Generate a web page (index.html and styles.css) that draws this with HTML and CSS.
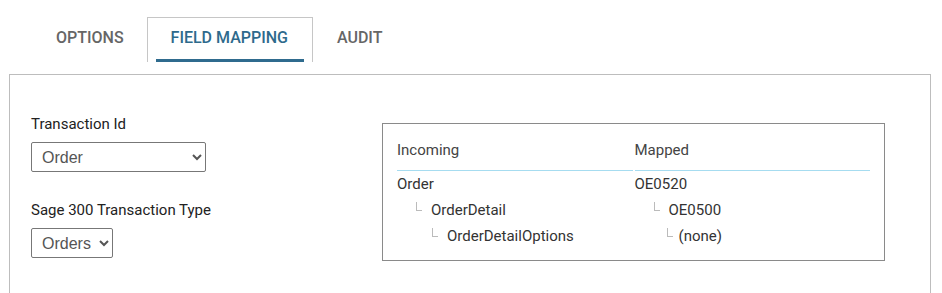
FILE: index.html
```html
<!DOCTYPE html>
<html lang="en">
<head>
    <meta charset="UTF-8">
    <meta name="viewport" content="width=device-width, initial-scale=1.0">
    <title>Field Mapping</title>
    <link rel="stylesheet" href="styles.css">
</head>
<body>
    <div class="tabs">
        <a href="#" class="tab"><span>Options</span></a>
        <a href="#" class="tab active"><span>Field Mapping</span></a>
        <a href="#" class="tab"><span>Audit</span></a>
    </div>

    <div class="panel">
        <div class="form-col">
            <label class="field-label" for="transactionId">Transaction Id</label>
            <select id="transactionId" class="wide">
                <option>Order</option>
            </select>

            <label class="field-label second" for="sageType">Sage 300 Transaction Type</label>
            <select id="sageType">
                <option>Orders</option>
            </select>
        </div>

        <div class="mapping-box">
            <div class="mapping-grid">
                <div class="head">Incoming</div>
                <div class="head">Mapped</div>

                <div class="cell">Order</div>
                <div class="cell">OE0520</div>

                <div class="cell lvl1"><i class="branch"></i>OrderDetail</div>
                <div class="cell lvl1 mapped"><i class="branch"></i>OE0500</div>

                <div class="cell lvl2"><i class="branch"></i>OrderDetailOptions</div>
                <div class="cell lvl2 mapped"><i class="branch"></i>(none)</div>
            </div>
        </div>
    </div>
</body>
</html>
```

FILE: styles.css
```css
body {
    margin: 0;
    font-family: Roboto, "Liberation Sans", sans-serif;
    color: #222;
    background-color: white;
}
.tabs {
    display: flex;
    padding: 17px 0 0 32px;
    margin-bottom: 12px;
}
.tab {
    display: block;
    height: 44px;
    padding: 0 7px 0 8px;
    border: 1px solid transparent;
    border-bottom: none;
    font-size: 16px;
    font-weight: 500;
    text-transform: uppercase;
    text-decoration: none;
    color: #666;
}
.tab span {
    display: block;
    height: 41px;
    line-height: 40px;
    padding: 0 15px;
    border-bottom: 3px solid transparent;
}
.tab.active {
    padding-right: 8px;
    border-color: #c6c6c6;
    color: #2e6a8c;
}
.tab.active span {
    padding-right: 16px;
    border-bottom-color: #2f6b8e;
}
.panel {
    display: flex;
    align-items: flex-start;
    margin: 0 11px 0 9px;
    height: 240px;
    border: 1px solid #bdbdbd;
    padding: 39px 0 0 21px;
}
.form-col {
    width: 351px;
    display: flex;
    flex-direction: column;
    align-items: flex-start;
}
.field-label {
    font-size: 15px;
    line-height: 20px;
    color: #222;
    margin-bottom: 8px;
}
.field-label.second {
    margin-top: 28px;
}
select {
    height: 30px;
    font-family: "Liberation Sans", Arial, sans-serif;
    font-size: 16px;
    color: #555;
    background: white;
    border: 1px solid #777;
    border-radius: 2px;
    padding: 0 5px 0 6px;
}
select.wide {
    width: 175px;
}
.mapping-box {
    width: 473px;
    margin-top: 9px;
    border: 1px solid #8a8a8a;
    padding: 16px 14px 11px 14px;
}
.mapping-grid {
    display: grid;
    grid-template-columns: 1fr 1fr;
    column-gap: 2px;
    font-size: 15px;
    color: #333;
}
.head {
    line-height: 20px;
    padding-bottom: 10px;
    border-bottom: 1px solid #a6dcf0;
    color: #444;
}
.cell {
    line-height: 26px;
}
.lvl1 {
    padding-left: 19px;
}
.lvl2 {
    padding-left: 35px;
}
.lvl2.mapped {
    padding-left: 32px;
}
.branch {
    display: inline-block;
    width: 5px;
    height: 8px;
    margin-right: 9px;
    border-left: 1px solid #bbb;
    border-bottom: 1px solid #bbb;
    vertical-align: 4px;
}
.lvl2.mapped .branch {
    margin-right: 6px;
}
```
